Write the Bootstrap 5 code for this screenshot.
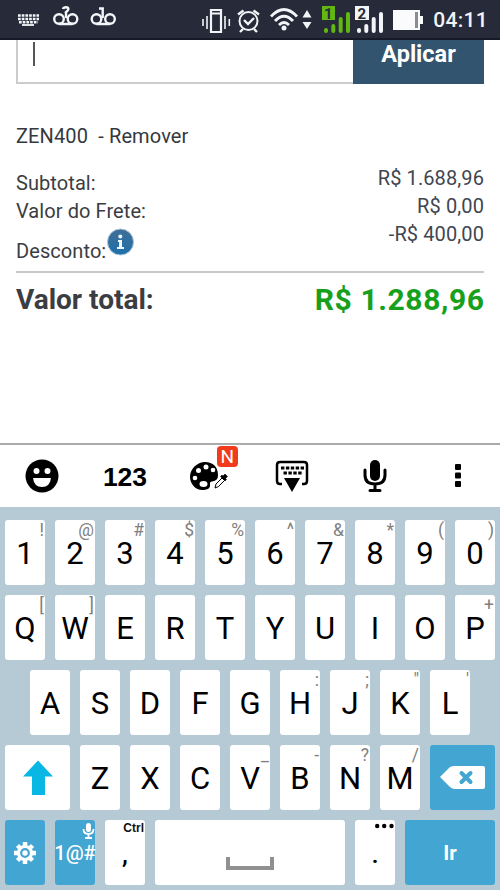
<!DOCTYPE html>
<html lang="pt-BR">
<head>
<meta charset="utf-8">
<meta name="viewport" content="width=device-width, initial-scale=1">
<title>Carrinho</title>
<link href="https://cdn.jsdelivr.net/npm/bootstrap@5.3.0/dist/css/bootstrap.min.css" rel="stylesheet">
<style>
body{font-family:Roboto,"Liberation Sans",sans-serif;width:500px;height:890px;overflow:hidden;color:#3b3d42}
svg{display:block;flex:none}
.statusbar{height:40px;background:#262a39;border-bottom:2px solid #171a26;color:#fff}
.clock{font-size:21px;font-weight:500;line-height:41px;letter-spacing:.3px;color:#f1f3f6}
.checkout{height:403px;padding:0 16px;font-size:20px;line-height:28px}
.coupon{height:44px}
.coupon-field{border:2px solid #ccc;border-top:0;border-right:0;padding:2px 0 0 15px}
.caret{width:2px;height:24px;background:#55575c}
.apply{width:131px;background:#33546e;color:#fff;font-weight:700;font-size:23.500px;line-height:28px;border:0}
.code{margin-top:38px;white-space:pre;color:#35383f;letter-spacing:.12px}
.sums{margin-top:14px;height:109px;border-bottom:2px solid #c9c9cd}
.labels{padding-top:5px;letter-spacing:.08px}
.desc{height:41px;padding-top:12px}
.info{margin-top:-9px}
.amounts{color:#414650;letter-spacing:.1px}
.grand{font-size:28px;font-weight:700;line-height:36px;margin-top:9px}
.green{color:#17a01b;font-size:30px;line-height:35px;letter-spacing:.6px;margin-right:-.6px}
.tools{height:64px;border-top:2px solid #aaa}
.tool{width:83.33px;height:62px}
.num{font-family:"Liberation Sans",sans-serif;font-size:26.500px;font-weight:700;color:#000;padding-top:3px}
.newtag{left:50px;top:1px;width:21px;height:21px;border-radius:4px;background:#f23b1d;color:#fff;font-size:19px;line-height:21px}
.keyboard{height:383px;background:#b6cad5;padding:13px 5px 5px;gap:10px}
.keyrow{gap:10px;height:65px}
.key{width:40px;height:65px;border-radius:3px;background:#fff;color:#000;font-size:31px;line-height:67px}
.wide{width:65px}.space{width:190px}.go{width:90px;font-size:20.500px;font-weight:700}
.blue{background:#43a5d1;color:#fff}
.hint{right:1px;top:0;font-size:17.500px;line-height:20px;color:#808080}
.sym{font-size:20px;font-weight:500;line-height:67px;white-space:nowrap}
.ctrl{font-size:12px;font-weight:700;line-height:16px;color:#111;font-family:"Liberation Sans",sans-serif}
.low{font-size:26px;line-height:68px;font-weight:500}
</style>
<script src="https://cdn.jsdelivr.net/npm/bootstrap@5.3.0/dist/js/bootstrap.bundle.min.js"></script>
</head>
<body class="bg-white">
<header class="statusbar d-flex justify-content-between">
<svg width="130" height="38" fill="none" stroke="#f4f6f9">
<path d="M18 15.500h21M18 19h21M19 22.300h19" stroke-width="2.500" stroke-dasharray="2.700 1"/><path d="M22 25h12" stroke-width="1.800"/>
<g stroke-width="2.400"><circle cx="59" cy="19" r="4.800"/><circle cx="72.500" cy="19" r="4.800"/><path d="M59 24h13.500M63 9q.5-1.700 2.900-1.700 2.500 0 2.500 1.700 0 1.300-3.400 4M66 12.500v5.500"/>
<circle cx="96.500" cy="19" r="4.800"/><circle cx="110" cy="19" r="4.800"/><path d="M96.500 24H110M99 8.500h3.700V18"/></g>
</svg>
<div class="d-flex">
<svg width="230" height="38" fill="none" stroke="#f2f4f7" stroke-width="2" viewBox="200 0 230 38">
<path d="M204 19v7M208 16v13M226 16v13M230.300 19v7" stroke-width="1.600"/><path d="M212 10h10v22h-10zM212 13.500h10" stroke-width="2.200"/>
<circle cx="249.500" cy="21" r="9"/><path d="M245 20l4 4 6-6M244 29l-3 3M255 29l3 3M239 14.500l5.500-4M260 14.500l-5.500-4" stroke-width="2.400"/>
<path d="M272 16.500q13-14 26 0M276 21q9-9.500 18 0M280 25q5-5 10 0" stroke-width="2.800"/><circle cx="285" cy="28" r="2.500" fill="#f2f4f7" stroke="none"/>
<path d="M308 10l4.500 7.500h-9zM308 29l4.500-7h-9z" fill="#f2f4f7" stroke="none"/>
<g stroke="#62b714" stroke-linecap="round" stroke-width="4"><path d="M327 30v1M334.300 26v5M341.700 19v12M349 14v17"/></g><path d="M323 6h13v14h-13z" fill="#62b714" stroke="none"/>
<g stroke-linecap="round" stroke-width="4"><path d="M360 30v1M367.300 26v5M374.700 19v12M382 14v17"/></g><path d="M356 6h14v14h-14z" fill="#f2f4f7" stroke="none"/>
<path d="M394 10h27v6h3v8h-3v6h-27z" fill="#fafbfc" stroke="none"/><path d="M417.500 12v16" stroke="#888d91" stroke-width="3"/>
<g fill="#262a39" stroke="none" font-family="Roboto" font-weight="700" font-size="15"><text x="325" y="18.500">1</text><text x="358.500" y="18.500">2</text></g>
</svg>
<div class="clock ms-1 pe-2 me-1">04:11</div>
</div>
</header>
<main class="checkout">
<div class="coupon d-flex"><div class="coupon-field flex-fill"><div class="caret"></div></div><div class="apply text-center">Aplicar</div></div>
<div class="code">ZEN400  - Remover</div>
<section class="sums d-flex justify-content-between">
<div class="labels"><div>Subtotal:</div><div>Valor do Frete:</div><div class="desc d-flex"><span>Desconto:</span>
<svg class="info" width="28" height="28" viewBox="0 0 28 28"><defs><linearGradient id="ball" x2="0" y2="1"><stop stop-color="#416e96"/><stop offset="1" stop-color="#1e70ac"/></linearGradient></defs><circle cx="14.500" cy="14" r="13" fill="url(#ball)" stroke="#a9c5d8"/><path d="M12 12h4v7h2v2h-7v-2h2v-5h-1z" fill="#eef7fc"/><circle cx="14.300" cy="8.500" r="2" fill="#eef7fc"/></svg></div></div>
<div class="amounts text-end"><div>R$ 1.688,96</div><div>R$ 0,00</div><div>-R$ 400,00</div></div>
</section>
<div class="grand d-flex justify-content-between"><span>Valor total:</span><span class="green">R$ 1.288,96</span></div>
</main>
<nav class="tools d-flex">
<div class="tool d-flex align-items-center justify-content-center"><svg width="34" height="34"><circle cx="17" cy="17" r="16.500"/><path d="M8 19h18q-1 9-9 9t-9-9" fill="#fff"/><circle cx="11.500" cy="12" r="3" fill="#fff"/><circle cx="22.500" cy="12" r="3" fill="#fff"/></svg></div>
<div class="tool num d-flex align-items-center justify-content-center">123</div>
<div class="tool position-relative"><svg width="83" height="62"><path d="M38 17c-8 0-15 7-15 15 0 7 6 14 14 13 7-1 6-4 6-7 1-3 8 0 8-8 0-8-5-13-13-13z"/><g fill="#fff"><circle cx="28" cy="33" r="2.300"/><circle cx="31.500" cy="25.500" r="2.500"/><circle cx="39" cy="22" r="2.500"/><circle cx="46" cy="25" r="2.300"/><ellipse cx="36.500" cy="39" rx="4" ry="3"/></g><path d="M48 43l1-4 6-6 2.500 2.500-6 6z" fill="#fff" stroke="#000"/><path d="M53.500 31.500l1.500-1.500 1 1 2-2 2.500 2.500-2 2 1 1-1.500 1.500z" stroke="#000" stroke-width=".6"/></svg><div class="newtag position-absolute text-center">N</div></div>
<div class="tool d-flex align-items-center justify-content-center"><svg width="34" height="34" fill="none" stroke="#000"><path d="M7 25H5q-3 0-3-3V6q0-3 3-3h24q3 0 3 3v16q0 3-3 3h-2" stroke-width="2.500"/><path d="M6 9h23M8.500 14h19" stroke-width="3" stroke-dasharray="3.400 1.500"/><path d="M9 19h16l-8 14z" fill="#000" stroke="none"/></svg></div>
<div class="tool d-flex align-items-center justify-content-center"><svg width="26" height="36" fill="none" stroke="#000" stroke-width="3"><path d="M3 12v5q0 9 10 9t10-9v-5M13 26v6M8 32.500h10" stroke-linecap="round"/><rect x="8" y="2" width="10" height="21" rx="5" fill="#000" stroke="none"/></svg></div>
<div class="tool d-flex align-items-center justify-content-center"><svg width="6" height="24"><rect width="6" height="6" rx="1"/><rect y="8.500" width="6" height="6" rx="1"/><rect y="17" width="6" height="6" rx="1"/></svg></div>
</nav>
<section class="keyboard d-flex flex-column">
<div class="keyrow d-flex"><div class="key position-relative text-center">1<span class="hint position-absolute">!</span></div><div class="key position-relative text-center">2<span class="hint position-absolute">@</span></div><div class="key position-relative text-center">3<span class="hint position-absolute">#</span></div><div class="key position-relative text-center">4<span class="hint position-absolute">$</span></div><div class="key position-relative text-center">5<span class="hint position-absolute">%</span></div><div class="key position-relative text-center">6<span class="hint position-absolute">^</span></div><div class="key position-relative text-center">7<span class="hint position-absolute">&amp;</span></div><div class="key position-relative text-center">8<span class="hint position-absolute">*</span></div><div class="key position-relative text-center">9<span class="hint position-absolute">(</span></div><div class="key position-relative text-center">0<span class="hint position-absolute">)</span></div></div>
<div class="keyrow d-flex"><div class="key position-relative text-center">Q<span class="hint position-absolute">[</span></div><div class="key position-relative text-center">W<span class="hint position-absolute">]</span></div><div class="key text-center">E</div><div class="key text-center">R</div><div class="key text-center">T</div><div class="key text-center">Y</div><div class="key text-center">U</div><div class="key text-center">I</div><div class="key text-center">O</div><div class="key position-relative text-center">P<span class="hint position-absolute">+</span></div></div>
<div class="keyrow d-flex justify-content-center"><div class="key text-center">A</div><div class="key text-center">S</div><div class="key text-center">D</div><div class="key text-center">F</div><div class="key text-center">G</div><div class="key position-relative text-center">H<span class="hint position-absolute">:</span></div><div class="key position-relative text-center">J<span class="hint position-absolute">;</span></div><div class="key position-relative text-center">K<span class="hint position-absolute">"</span></div><div class="key position-relative text-center">L<span class="hint position-absolute">'</span></div></div>
<div class="keyrow d-flex"><div class="key wide d-flex align-items-center justify-content-center"><svg width="30" height="36"><path d="M15 0.500l15 16h-8V35H9V16.500H0z" fill="#08b7e3"/></svg></div><div class="key text-center">Z</div><div class="key text-center">X</div><div class="key text-center">C</div><div class="key position-relative text-center">V<span class="hint position-absolute">_</span></div><div class="key position-relative text-center">B<span class="hint position-absolute">-</span></div><div class="key position-relative text-center">N<span class="hint position-absolute">?</span></div><div class="key position-relative text-center">M<span class="hint position-absolute">/</span></div><div class="key wide blue d-flex align-items-center justify-content-center"><svg width="46" height="26"><path d="M0 12L10 2q2-1 5-1h28q2 0 2 2v19q0 2-2 2H15q-3 0-5-2z" fill="#fff"/><path d="M21.500 8l9 9M30.500 8l-9 9" stroke="#43a5d1" stroke-width="4" stroke-linecap="round"/></svg></div></div>
<div class="keyrow d-flex">
<div class="key blue d-flex align-items-center justify-content-center"><svg width="24" height="24" viewBox="-12 -12 24 24"><g stroke="#fff" stroke-width="4.500"><path d="M0-11v22M-11 0h22M-7.500-7.500l15 15M7.500-7.500l-15 15"/></g><circle r="8" fill="#fff"/><circle r="3.800" fill="#fff" stroke="#43a5d1" stroke-width="2.200"/></svg></div>
<div class="key blue sym position-relative d-flex justify-content-center">1@#<svg class="position-absolute end-0 top-0" width="14" height="20" fill="none" stroke="#fff" stroke-width="1.800"><path d="M2.500 9q0 5 5 5t5-5M7.500 14v4M4 18h7"/><rect x="5" y="3" width="5" height="9" rx="2.500" fill="#fff" stroke="none"/></svg></div>
<div class="key low position-relative text-center">,<span class="hint ctrl position-absolute">Ctrl</span></div>
<div class="key space d-flex justify-content-center"><svg width="48" height="65"><path d="M2 37v11h44V37" fill="none" stroke="#909090" stroke-width="4"/></svg></div>
<div class="key low position-relative text-center">.<svg class="position-absolute end-0 top-0" width="20" height="12"><circle cx="2.200" cy="6" r="2.200"/><circle cx="9.200" cy="6" r="2.200"/><circle cx="16.500" cy="6" r="2.200"/></svg></div>
<div class="key go blue text-center">Ir</div>
</div>
</section>
</body>
</html>
